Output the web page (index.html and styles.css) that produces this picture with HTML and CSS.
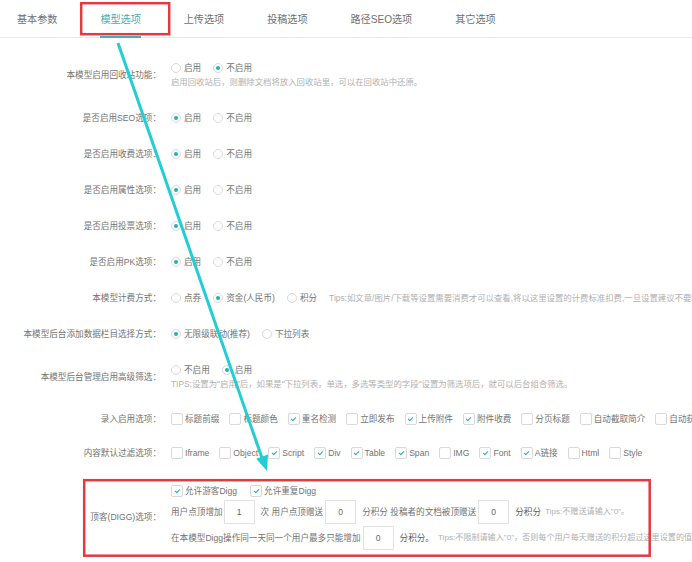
FILE: index.html
```html
<!DOCTYPE html>
<html lang="zh-CN">
<head>
<meta charset="utf-8">
<title>模型选项</title>
<link rel="stylesheet" href="styles.css">
</head>
<body>
<div class="tabs">
  <div class="tab">基本参数</div>
  <div class="tab active">模型选项</div>
  <div class="tab">上传选项</div>
  <div class="tab">投稿选项</div>
  <div class="tab">路径SEO选项</div>
  <div class="tab">其它选项</div>
</div>

<div class="form">
  <div class="row">
    <div class="label">本模型启用回收站功能：</div>
    <div class="ctrl">
      <div class="line"><span class="opt"><span class="radio"></span>启用</span><span class="opt"><span class="radio on"></span>不启用</span></div>
      <div class="line tip">启用回收站后，则删除文档将放入回收站里，可以在回收站中还原。</div>
    </div>
  </div>
  <div class="row">
    <div class="label">是否启用SEO选项：</div>
    <div class="ctrl"><div class="line"><span class="opt"><span class="radio on"></span>启用</span><span class="opt"><span class="radio"></span>不启用</span></div></div>
  </div>
  <div class="row">
    <div class="label">是否启用收费选项：</div>
    <div class="ctrl"><div class="line"><span class="opt"><span class="radio on"></span>启用</span><span class="opt"><span class="radio"></span>不启用</span></div></div>
  </div>
  <div class="row">
    <div class="label">是否启用属性选项：</div>
    <div class="ctrl"><div class="line"><span class="opt"><span class="radio on"></span>启用</span><span class="opt"><span class="radio"></span>不启用</span></div></div>
  </div>
  <div class="row">
    <div class="label">是否启用投票选项：</div>
    <div class="ctrl"><div class="line"><span class="opt"><span class="radio on"></span>启用</span><span class="opt"><span class="radio"></span>不启用</span></div></div>
  </div>
  <div class="row">
    <div class="label">是否启用PK选项：</div>
    <div class="ctrl"><div class="line"><span class="opt"><span class="radio on"></span>启用</span><span class="opt"><span class="radio"></span>不启用</span></div></div>
  </div>
  <div class="row">
    <div class="label">本模型计费方式：</div>
    <div class="ctrl"><div class="line"><span class="opt"><span class="radio"></span>点券</span><span class="opt"><span class="radio on"></span>资金(人民币)</span><span class="opt"><span class="radio"></span>积分</span><span class="tip">Tips:如文章/图片/下载等设置需要消费才可以查看,将以这里设置的计费标准扣费,一旦设置建议不要随意更改</span></div></div>
  </div>
  <div class="row">
    <div class="label">本模型后台添加数据栏目选择方式：</div>
    <div class="ctrl"><div class="line"><span class="opt"><span class="radio on"></span>无限级联动(推荐)</span><span class="opt"><span class="radio"></span>下拉列表</span></div></div>
  </div>
  <div class="row">
    <div class="label">本模型后台管理启用高级筛选：</div>
    <div class="ctrl">
      <div class="line"><span class="opt"><span class="radio"></span>不启用</span><span class="opt"><span class="radio on"></span>启用</span></div>
      <div class="line tip">TIPS:设置为"启用"后，如果是"下拉列表，单选，多选等类型的字段"设置为筛选项后，就可以后台组合筛选。</div>
    </div>
  </div>
  <div class="row cbrow">
    <div class="label">录入启用选项：</div>
    <div class="ctrl"><div class="line">
      <span class="opt cbopt"><span class="cb"></span>标题前缀</span>
      <span class="opt cbopt"><span class="cb"></span>标题颜色</span>
      <span class="opt cbopt"><span class="cb on"></span>重名检测</span>
      <span class="opt cbopt"><span class="cb"></span>立即发布</span>
      <span class="opt cbopt"><span class="cb on"></span>上传附件</span>
      <span class="opt cbopt"><span class="cb on"></span>附件收费</span>
      <span class="opt cbopt"><span class="cb"></span>分页标题</span>
      <span class="opt cbopt"><span class="cb"></span>自动截取简介</span>
      <span class="opt cbopt"><span class="cb"></span>自动获取关键字</span>
    </div></div>
  </div>
  <div class="row cbrow">
    <div class="label">内容默认过滤选项：</div>
    <div class="ctrl"><div class="line">
      <span class="opt cbopt"><span class="cb"></span>Iframe</span>
      <span class="opt cbopt"><span class="cb"></span>Object</span>
      <span class="opt cbopt"><span class="cb on"></span>Script</span>
      <span class="opt cbopt"><span class="cb on"></span>Div</span>
      <span class="opt cbopt"><span class="cb on"></span>Table</span>
      <span class="opt cbopt"><span class="cb on"></span>Span</span>
      <span class="opt cbopt"><span class="cb"></span>IMG</span>
      <span class="opt cbopt"><span class="cb on"></span>Font</span>
      <span class="opt cbopt"><span class="cb on"></span>A链接</span>
      <span class="opt cbopt"><span class="cb"></span>Html</span>
      <span class="opt cbopt"><span class="cb"></span>Style</span>
    </div></div>
  </div>
  <div class="row digg">
    <div class="label">顶客(DIGG)选项：</div>
    <div class="ctrl">
      <div class="line d1"><span class="opt cbopt dopt"><span class="cb on"></span>允许游客Digg</span><span class="opt cbopt dopt"><span class="cb on"></span>允许重复Digg</span></div>
      <div class="line d2">用户点顶增加<span class="inp first">1</span>次 用户点顶赠送<span class="inp">0</span>分积分 投稿者的文档被顶赠送<span class="inp">0</span><span class="unit">分积分</span><span class="tip small">Tips:不赠送请输入"0"。</span></div>
      <div class="line d3">在本模型Digg操作同一天同一个用户最多只能增加<span class="inp">0</span><span class="unit">分积分。</span><span class="tip small">Tips:不限制请输入"0"，否则每个用户每天赠送的积分超过这里设置的值将不再增加。</span></div>
    </div>
  </div>
</div>

<svg class="marks" width="692" height="562" viewBox="0 0 692 562" aria-hidden="true">
  <rect x="81.2" y="3.2" width="88" height="31" fill="none" stroke="#e23a3f" stroke-width="2.5"/>
  <rect x="84.2" y="480.2" width="565.5" height="75.5" fill="none" stroke="#e23a3f" stroke-width="2.5"/>
  <line x1="118" y1="43" x2="262" y2="458" stroke="#22cdd3" stroke-width="3"/>
  <polygon points="267,471 256.2,458.8 268,454.6" fill="#22cdd3"/>
</svg>
</body>
</html>
```

FILE: styles.css
```css
html, body {
  margin: 0;
  padding: 0;
}
body {
  width: 692px;
  height: 562px;
  overflow: hidden;
  position: relative;
  background: #fff;
  color: #737373;
  font-family: "Liberation Sans", "Noto Sans CJK SC", sans-serif;
  font-size: 8.6px;
  white-space: nowrap;
}

.tabs {
  display: flex;
  gap: 43px;
  padding-left: 17px;
  height: 37px;
  border-bottom: 1px solid #e8e8e8;
  font-size: 10.1px;
}
.tab {
  box-sizing: border-box;
  height: 38px;
  padding-top: 13px;
  line-height: 14px;
  color: #707070;
  flex: none;
}
.tab.active {
  color: #3cb1bb;
  border-bottom: 2px solid #3cb1bb;
}

.form {
  padding-top: 12px;
}
.row {
  display: flex;
  align-items: center;
  padding: 11px 0;
}
.row.cbrow {
  padding: 10px 0;
}
.label {
  width: 161px;
  flex: none;
  text-align: right;
  line-height: 14px;
}
.ctrl {
  margin-left: 10px;
}
.line {
  display: flex;
  align-items: center;
  height: 14px;
  line-height: 14px;
}
.opt {
  display: flex;
  align-items: center;
  margin-right: 12px;
  flex: none;
}
.cbopt {
  margin-right: 10px;
}
.dopt {
  margin-right: 13px;
}
.radio {
  width: 8px;
  height: 8px;
  border: 1px solid #d9d9d9;
  border-radius: 50%;
  margin-right: 3px;
  display: flex;
  align-items: center;
  justify-content: center;
  flex: none;
}
.radio.on::after {
  content: "";
  width: 4px;
  height: 4px;
  border-radius: 50%;
  background: #1fb3aa;
}
.cb {
  width: 10px;
  height: 10px;
  border: 1px solid #d9d9d9;
  border-radius: 2px;
  margin-right: 2px;
  display: flex;
  align-items: center;
  justify-content: center;
  flex: none;
}
.cb.on::after {
  content: "";
  width: 2px;
  height: 4px;
  border: solid #1fb3aa;
  border-width: 0 1.2px 1.2px 0;
  transform: rotate(45deg);
  margin-top: -1px;
}
.tip {
  color: #b0b0b0;
  font-size: 8.4px;
}
.tip.small {
  font-size: 8.1px;
}

.row.digg {
  padding: 14px 0 6px;
}
.digg .d1 {
  margin-bottom: 2px;
}
.digg .d2 {
  height: 24px;
  margin-bottom: 2px;
}
.digg .d3 {
  height: 24px;
}
.inp {
  box-sizing: border-box;
  width: 31px;
  height: 24px;
  border: 1px solid #e2e2e2;
  display: flex;
  align-items: center;
  justify-content: center;
  color: #666;
  margin: 0 6px 0 2px;
  flex: none;
}
.inp.first {
  margin-left: 1px;
}
.unit {
  color: #5a5a5a;
  margin-right: 4px;
}

.marks {
  position: absolute;
  left: 0;
  top: 0;
  pointer-events: none;
}
```
